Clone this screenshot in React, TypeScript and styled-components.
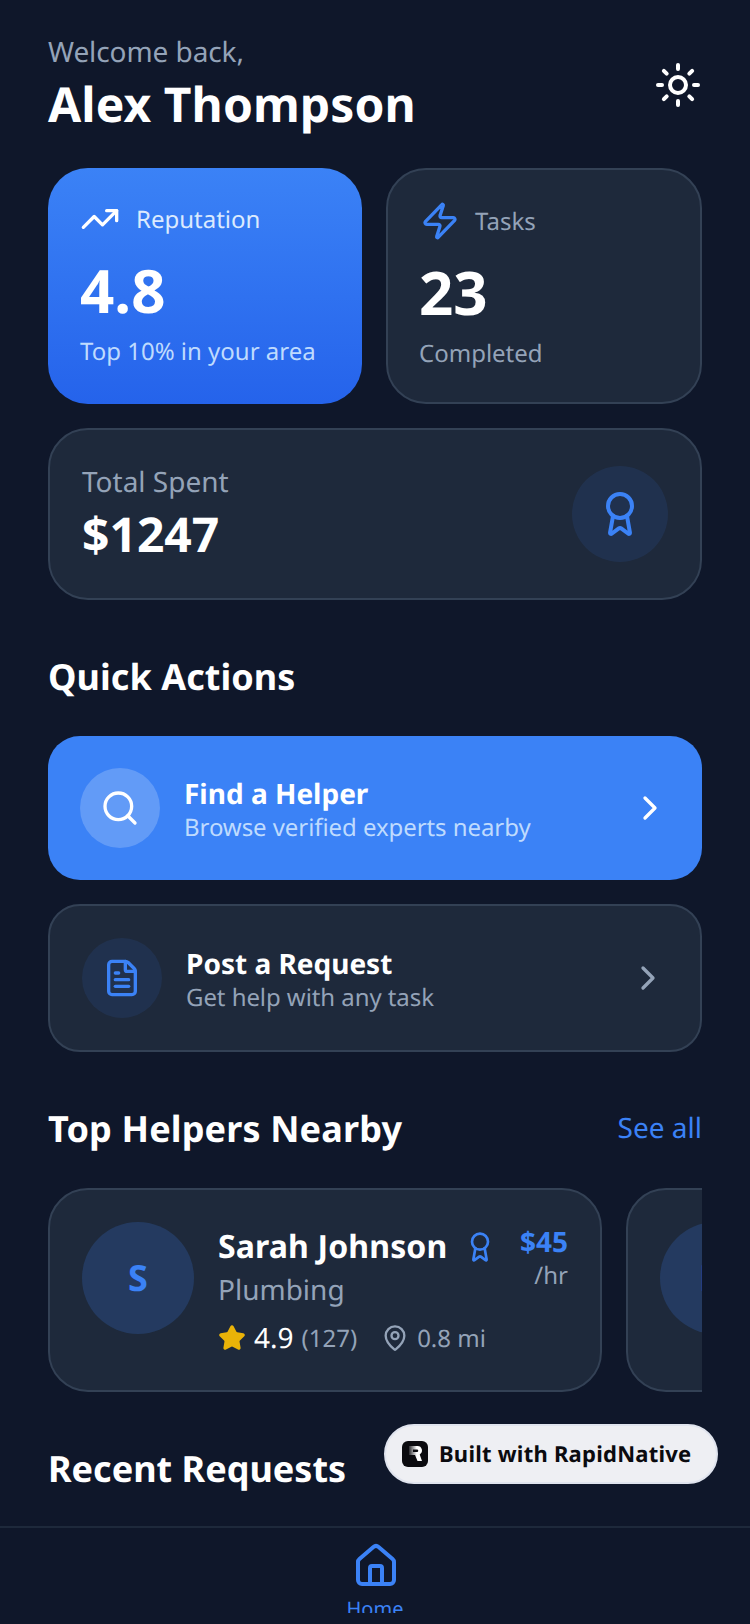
import styled, { createGlobalStyle } from "styled-components";
import { Award, ChevronRight, FileText, House, MapPin, Search, Star, Sun, TrendingUp, Zap } from "lucide-react";

const GlobalStyle = createGlobalStyle`
  html, body {
    margin: 0;
    padding: 0;
    background: #0f172a;
  }
  * {
    box-sizing: border-box;
  }
`;

const Screen = styled.div`
  width: 750px;
  height: 1624px;
  position: relative;
  display: flex;
  flex-direction: column;
  overflow: hidden;
  padding-bottom: 11px;
  background: #0f172a;
  font-family: "Noto Sans", "Open Sans", sans-serif;
  text-rendering: geometricPrecision;
  color: #fff;
`;

const Content = styled.main`
  flex: 1;
  min-height: 0;
  overflow: hidden;
  padding: 32px 48px 0;
`;

const Header = styled.header`
  display: flex;
  justify-content: space-between;
  align-items: center;
  margin-bottom: 31px;
`;

const Greeting = styled.div`
  margin-bottom: 1px;
  font-size: 28px;
  line-height: 40px;
  letter-spacing: -0.08px;
  color: #94a3b8;
`;

const UserName = styled.h1`
  margin: 0;
  font-size: 48px;
  line-height: 64px;
  letter-spacing: 0.08px;
  font-weight: 700;
`;

const SunButton = styled.div`
  display: flex;
  color: #fff;
  margin-top: 1px;
`;

const StatsRow = styled.div`
  display: flex;
  justify-content: space-between;
  margin-bottom: 24px;
`;

const StatCard = styled.div<{ $primary?: boolean }>`
  width: ${(p) => (p.$primary ? 314 : 316)}px;
  height: 236px;
  padding: ${(p) => (p.$primary ? "31px 32px" : "31px")};
  border-radius: 40px;
  background: ${(p) => (p.$primary ? "linear-gradient(180deg, #3b82f6, #2563eb)" : "#1e293b")};
  border: ${(p) => (p.$primary ? "0" : "2px solid #334155")};
`;

const StatHead = styled.div<{ $primary?: boolean }>`
  display: flex;
  align-items: center;
  gap: ${(p) => (p.$primary ? 16 : 15)}px;
  height: 40px;
  padding-left: ${(p) => (p.$primary ? 0 : 1)}px;
  font-size: 24px;
  color: ${(p) => (p.$primary ? "#dbeafe" : "#94a3b8")};
  svg {
    color: ${(p) => (p.$primary ? "#fff" : "#3b82f6")};
  }
`;

const StatValue = styled.div`
  margin-top: 15px;
  font-size: 60px;
  line-height: 72px;
  font-weight: 700;
`;

const StatNote = styled.div<{ $primary?: boolean }>`
  margin-top: 10px;
  font-size: 24px;
  line-height: 32px;
  color: ${(p) => (p.$primary ? "#bfdbfe" : "#94a3b8")};
`;

const SpentCard = styled.div`
  height: 172px;
  padding: 0 32px;
  display: flex;
  align-items: center;
  justify-content: space-between;
  border-radius: 40px;
  background: #1e293b;
  border: 2px solid #334155;
`;

const SpentText = styled.div`
  margin-bottom: 1px;
`;

const SpentLabel = styled.div`
  margin-bottom: 3px;
  font-size: 28px;
  line-height: 40px;
  color: #94a3b8;
`;

const SpentValue = styled.div`
  font-size: 48px;
  line-height: 60px;
  font-weight: 700;
`;

const IconCircle = styled.div<{ $size: number; $light?: boolean }>`
  width: ${(p) => p.$size}px;
  height: ${(p) => p.$size}px;
  flex: none;
  border-radius: 50%;
  display: flex;
  align-items: center;
  justify-content: center;
  background: ${(p) => (p.$light ? "rgba(255, 255, 255, 0.2)" : "rgba(59, 130, 246, 0.1)")};
  color: ${(p) => (p.$light ? "#fff" : "#3b82f6")};
`;

const SectionTitle = styled.h2<{ $top: number; $spacing?: number }>`
  margin: ${(p) => p.$top}px 0 0;
  font-size: 36px;
  line-height: 48px;
  letter-spacing: ${(p) => p.$spacing ?? 0}px;
  font-weight: 700;
`;

const ActionList = styled.div`
  display: flex;
  flex-direction: column;
  gap: 24px;
  margin-top: 35px;
`;

const ActionCard = styled.div<{ $primary?: boolean }>`
  height: ${(p) => (p.$primary ? 144 : 148)}px;
  padding: 0 32px;
  display: flex;
  align-items: center;
  gap: 24px;
  border-radius: 32px;
  background: ${(p) => (p.$primary ? "#3b82f6" : "#1e293b")};
  border: ${(p) => (p.$primary ? "0" : "2px solid #334155")};
  > svg {
    color: ${(p) => (p.$primary ? "#fff" : "#94a3b8")};
  }
`;

const ActionText = styled.div`
  flex: 1;
  padding-top: 4px;
`;

const ActionTitle = styled.div`
  font-size: 28px;
  line-height: 34px;
  font-weight: 700;
`;

const ActionSub = styled.div<{ $primary?: boolean }>`
  margin-top: 1px;
  font-size: 24px;
  line-height: 32px;
  letter-spacing: -0.07px;
  color: ${(p) => (p.$primary ? "#bfdbfe" : "#94a3b8")};
`;

const SectionHead = styled.div`
  display: flex;
  justify-content: space-between;
  align-items: center;
  margin-top: 53px;
`;

const SeeAll = styled.span`
  padding-bottom: 2px;
  font-size: 28px;
  color: #3b82f6;
`;

const HelperScroller = styled.div`
  display: flex;
  gap: 24px;
  overflow: hidden;
  margin-top: 35px;
`;

const HelperCard = styled.div`
  flex: none;
  width: 554px;
  height: 204px;
  padding: 32px;
  display: flex;
  gap: 24px;
  border-radius: 40px;
  background: #1e293b;
  border: 2px solid #334155;
`;

const Avatar = styled.div`
  width: 112px;
  height: 112px;
  flex: none;
  padding-bottom: 2px;
  border-radius: 50%;
  display: flex;
  align-items: center;
  justify-content: center;
  background: rgba(59, 130, 246, 0.2);
  color: #3b82f6;
  font-size: 36px;
  font-weight: 700;
`;

const HelperInfo = styled.div`
  flex: 1;
  min-width: 0;
  padding-top: 3px;
`;

const NameRow = styled.div`
  display: flex;
  align-items: center;
  gap: 17px;
  svg {
    color: #3b82f6;
    flex: none;
  }
`;

const HelperName = styled.div`
  font-size: 32px;
  line-height: 44px;
  letter-spacing: 0.12px;
  font-weight: 700;
  white-space: nowrap;
`;

const HelperTrade = styled.div`
  margin-top: 1px;
  font-size: 28px;
  line-height: 40px;
  color: #94a3b8;
`;

const MetaRow = styled.div`
  display: flex;
  align-items: center;
  margin-top: 9px;
  font-size: 24px;
  color: #94a3b8;
  white-space: nowrap;
`;

const Rating = styled.span`
  font-size: 28px;
  color: #fff;
  margin: 0 8px;
`;

const Distance = styled.span`
  display: flex;
  align-items: center;
  gap: 8px;
  margin-left: 24px;
`;

const Rate = styled.div`
  text-align: right;
  flex: none;
  padding-top: 2px;
`;

const RatePrice = styled.div`
  font-size: 28px;
  line-height: 36px;
  font-weight: 700;
  color: #3b82f6;
`;

const RateUnit = styled.div`
  font-size: 24px;
  line-height: 32px;
  color: #94a3b8;
`;

const BottomNav = styled.nav`
  height: 87px;
  flex: none;
  overflow: hidden;
  display: flex;
  flex-direction: column;
  align-items: center;
  padding-top: 14px;
  border-top: 2px solid #1e293b;
  background: #0f172a;
  color: #3b82f6;
  font-size: 20px;
  svg {
    flex: none;
    margin-left: 2px;
  }
`;

const NavLabel = styled.span`
  margin-top: 5px;
  line-height: 28px;
`;

const Badge = styled.div`
  position: absolute;
  left: 384px;
  top: 1424px;
  width: 334px;
  height: 60px;
  display: flex;
  align-items: center;
  gap: 11px;
  padding-left: 16px;
  border-radius: 30px;
  border: 2px solid #e0e4ee;
  background: #eeeff3;
  color: #0b0b0f;
  font-size: 22px;
  letter-spacing: 0.24px;
  font-weight: 700;
`;

const BadgeLogo = styled.svg`
  flex: none;
`;

export default function App() {
  return (
    <Screen>
      <GlobalStyle />
      <Content>
        <Header>
          <div>
            <Greeting>Welcome back,</Greeting>
            <UserName>Alex Thompson</UserName>
          </div>
          <SunButton>
            <Sun size={48} strokeWidth={2} />
          </SunButton>
        </Header>

        <StatsRow>
          <StatCard $primary>
            <StatHead $primary>
              <TrendingUp size={40} />
              Reputation
            </StatHead>
            <StatValue>4.8</StatValue>
            <StatNote $primary>Top 10% in your area</StatNote>
          </StatCard>
          <StatCard>
            <StatHead>
              <Zap size={40} />
              Tasks
            </StatHead>
            <StatValue>23</StatValue>
            <StatNote>Completed</StatNote>
          </StatCard>
        </StatsRow>

        <SpentCard>
          <SpentText>
            <SpentLabel>Total Spent</SpentLabel>
            <SpentValue>$1247</SpentValue>
          </SpentText>
          <IconCircle $size={96}>
            <Award size={48} />
          </IconCircle>
        </SpentCard>

        <SectionTitle $top={53} $spacing={0.05}>Quick Actions</SectionTitle>
        <ActionList>
          <ActionCard $primary>
            <IconCircle $size={80} $light>
              <Search size={40} />
            </IconCircle>
            <ActionText>
              <ActionTitle>Find a Helper</ActionTitle>
              <ActionSub $primary>Browse verified experts nearby</ActionSub>
            </ActionText>
            <ChevronRight size={40} />
          </ActionCard>
          <ActionCard>
            <IconCircle $size={80}>
              <FileText size={40} />
            </IconCircle>
            <ActionText>
              <ActionTitle>Post a Request</ActionTitle>
              <ActionSub>Get help with any task</ActionSub>
            </ActionText>
            <ChevronRight size={40} />
          </ActionCard>
        </ActionList>

        <SectionHead>
          <SectionTitle $top={0} $spacing={0.15}>Top Helpers Nearby</SectionTitle>
          <SeeAll>See all</SeeAll>
        </SectionHead>
        <HelperScroller>
          <HelperCard>
            <Avatar>S</Avatar>
            <HelperInfo>
              <NameRow>
                <HelperName>Sarah Johnson</HelperName>
                <Award size={32} />
              </NameRow>
              <HelperTrade>Plumbing</HelperTrade>
              <MetaRow>
                <Star size={28} fill="#eab308" color="#eab308" />
                <Rating>4.9</Rating>
                (127)
                <Distance>
                  <MapPin size={28} />
                  0.8 mi
                </Distance>
              </MetaRow>
            </HelperInfo>
            <Rate>
              <RatePrice>$45</RatePrice>
              <RateUnit>/hr</RateUnit>
            </Rate>
          </HelperCard>
          <HelperCard>
            <Avatar>M</Avatar>
          </HelperCard>
        </HelperScroller>

        <SectionTitle $top={53}>Recent Requests</SectionTitle>
      </Content>

      <BottomNav>
        <House size={48} />
        <NavLabel>Home</NavLabel>
      </BottomNav>

      <Badge>
        <BadgeLogo width="26" height="26" viewBox="0 0 26 26">
          <defs>
            <linearGradient id="badgeR" x1="0" y1="0" x2="1" y2="0">
              <stop offset="0" stopColor="#2a2a2e" />
              <stop offset="0.6" stopColor="#ffffff" />
            </linearGradient>
          </defs>
          <rect width="26" height="26" rx="6" fill="#0b0b0f" />
          <path
            fillRule="evenodd"
            d="M7 5h8.5a4.5 4.5 0 0 1 2.2 8.4L20 20h-4.5l-2.5-6H7zM11 8.5V11h4a1.25 1.25 0 0 0 0-2.5z"
            fill="url(#badgeR)"
          />
        </BadgeLogo>
        Built with RapidNative
      </Badge>
    </Screen>
  );
}
